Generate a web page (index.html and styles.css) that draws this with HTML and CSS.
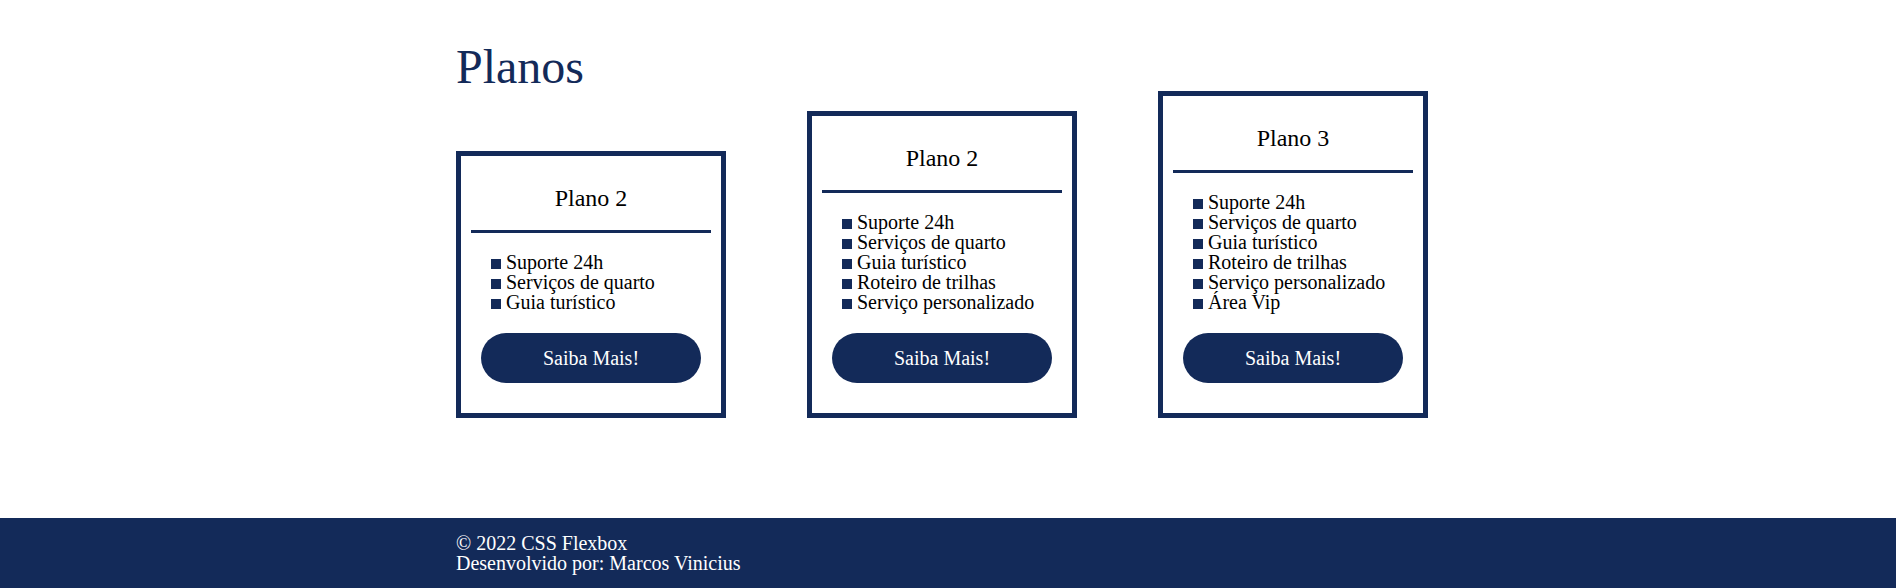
FILE: index.html
```html
<!DOCTYPE html>
<html lang="pt-BR">
<head>
    <meta charset="UTF-8">
    <meta name="viewport" content="width=device-width, initial-scale=1.0">
    <title>Planos</title>
    <link rel="stylesheet" href="styles.css">
</head>
<body>
    <main class="conteudo">
        <h1 class="titulo">Planos</h1>

        <div class="planos">
            <div class="plano">
                <h2 class="plano-nome">Plano 2</h2>
                <hr class="divisor">
                <ul class="beneficios">
                    <li>Suporte 24h</li>
                    <li>Serviços de quarto</li>
                    <li>Guia turístico</li>
                </ul>
                <button class="botao">Saiba Mais!</button>
            </div>

            <div class="plano">
                <h2 class="plano-nome">Plano 2</h2>
                <hr class="divisor">
                <ul class="beneficios">
                    <li>Suporte 24h</li>
                    <li>Serviços de quarto</li>
                    <li>Guia turístico</li>
                    <li>Roteiro de trilhas</li>
                    <li>Serviço personalizado</li>
                </ul>
                <button class="botao">Saiba Mais!</button>
            </div>

            <div class="plano">
                <h2 class="plano-nome">Plano 3</h2>
                <hr class="divisor">
                <ul class="beneficios">
                    <li>Suporte 24h</li>
                    <li>Serviços de quarto</li>
                    <li>Guia turístico</li>
                    <li>Roteiro de trilhas</li>
                    <li>Serviço personalizado</li>
                    <li>Área Vip</li>
                </ul>
                <button class="botao">Saiba Mais!</button>
            </div>
        </div>
    </main>

    <footer class="rodape">
        <div class="rodape-conteudo">
            <p>&copy; 2022 CSS Flexbox</p>
            <p>Desenvolvido por: Marcos Vinicius</p>
        </div>
    </footer>
</body>
</html>
```

FILE: styles.css
```css
* {
    box-sizing: border-box;
}

body {
    margin: 0;
    font-family: "Liberation Serif", "Times New Roman", serif;
    font-size: 20px;
    color: #000;
    background: #fff;
}

.conteudo {
    width: 984px;
    margin: 0 auto;
    padding: 43px 0 100px;
}

.titulo {
    margin: 0;
    font-size: 48px;
    font-weight: normal;
    line-height: 48px;
    color: #132a59;
}

.planos {
    display: flex;
    align-items: flex-end;
    gap: 81px;
}

.plano {
    width: 270px;
    border: 5px solid #132a59;
    padding: 0 10px 30px;
}

.plano-nome {
    margin: 28px 0 0;
    font-size: 24px;
    font-weight: normal;
    line-height: 28px;
    text-align: center;
}

.divisor {
    height: 3px;
    margin: 18px 0 0;
    border: none;
    background-color: #132a59;
}

.beneficios {
    list-style: none;
    margin: 19px 0 0;
    padding: 0 0 0 20px;
    line-height: 20px;
}

.beneficios li::before {
    content: "";
    display: inline-block;
    width: 10px;
    height: 10px;
    margin-right: 5px;
    background-color: #132a59;
}

.botao {
    display: block;
    width: 220px;
    height: 50px;
    margin: 21px auto 0;
    border: none;
    border-radius: 25px;
    background-color: #132a59;
    color: #fff;
    font-family: inherit;
    font-size: 20px;
    cursor: pointer;
}

.rodape {
    background-color: #132a59;
    color: #fff;
    padding: 15px 0;
}

.rodape-conteudo {
    width: 984px;
    margin: 0 auto;
    line-height: 20px;
}

.rodape-conteudo p {
    margin: 0;
}
```
